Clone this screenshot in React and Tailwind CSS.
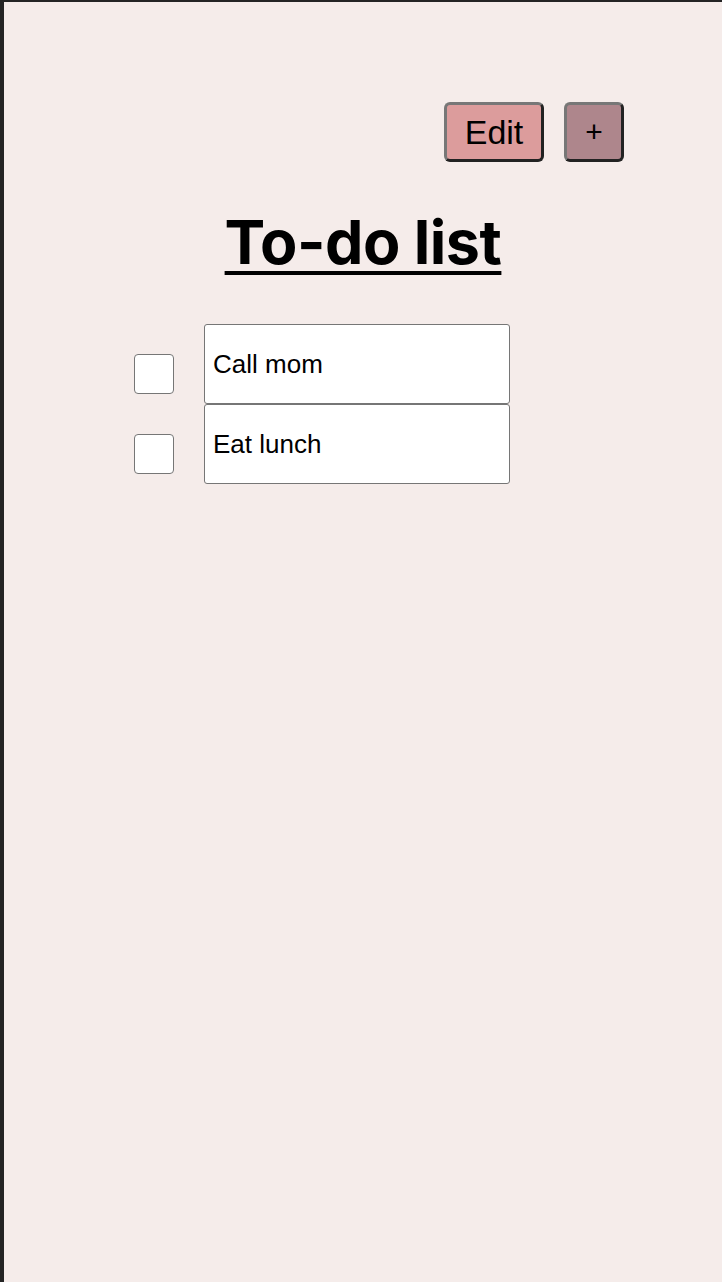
import { useState } from "react";

export default function App() {
    const [todos, setTodos] = useState([
        { id: 1, text: "Call mom", done: false },
        { id: 2, text: "Eat lunch", done: false },
    ]);

    const toggle = (id) =>
        setTodos(todos.map((t) => (t.id === id ? { ...t, done: !t.done } : t)));

    const update = (id, text) =>
        setTodos(todos.map((t) => (t.id === id ? { ...t, text } : t)));

    return (
        <div className="h-[1282px] bg-[#f5ecea] border-l-4 border-t-2 border-[#242424] font-['Liberation_Sans',Arial,sans-serif] text-black">
            {/* Top actions */}
            <div className="flex justify-end gap-5 pt-[100px] pr-[98px]">
                <button className="w-[100px] h-[60px] bg-[#dc9c9c] border-[3px] border-t-[#777] border-l-[#777] border-r-[#222] border-b-[#222] rounded-md text-[34px] leading-none">
                    Edit
                </button>
                <button className="w-[60px] h-[60px] bg-[#ae868c] border-[3px] border-t-[#777] border-l-[#777] border-r-[#222] border-b-[#222] rounded-md text-[30px] leading-none">
                    +
                </button>
            </div>

            <h1 className="mt-[40px] text-center font-['Inter',sans-serif] font-bold text-[61px] leading-[80px] underline decoration-[4px] underline-offset-[7px] tracking-[-0.5px]">
                To-do list
            </h1>

            {/* Todo rows */}
            <div className="mt-[42px] flex flex-col pl-[130px]">
                {todos.map((todo) => (
                    <div key={todo.id} className="flex items-start gap-[30px]">
                        <input
                            type="checkbox"
                            checked={todo.done}
                            onChange={() => toggle(todo.id)}
                            className="appearance-none mt-[30px] w-10 h-10 bg-white border-[1.5px] border-[#767676] rounded-[4px] checked:bg-[#dc9c9c]"
                        />
                        <input
                            type="text"
                            value={todo.text}
                            onChange={(e) => update(todo.id, e.target.value)}
                            className="w-[306px] h-20 bg-white border border-[#767676] rounded-[3px] px-2 text-[26px] outline-none"
                        />
                    </div>
                ))}
            </div>
        </div>
    );
}
